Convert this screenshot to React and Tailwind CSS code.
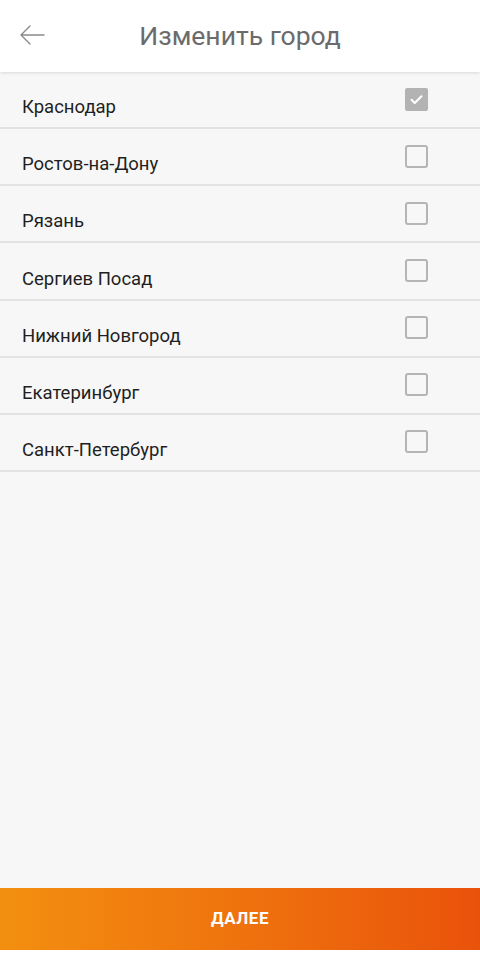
import { useState } from 'react';

const cities = [
  'Краснодар',
  'Ростов-на-Дону',
  'Рязань',
  'Сергиев Посад',
  'Нижний Новгород',
  'Екатеринбург',
  'Санкт-Петербург',
];

const Checkbox = ({ checked }) =>
  checked ? (
    <div className="w-[23px] h-[23px] rounded-[2px] bg-[#b3b3b3] flex items-center justify-center">
      <svg width="17" height="17" viewBox="0 0 24 24" fill="none" stroke="#fff" strokeWidth="3" strokeLinecap="round" strokeLinejoin="round">
        <path d="M5 12.5l4.5 4.5L19 7.5" />
      </svg>
    </div>
  ) : (
    <div className="w-[23px] h-[23px] rounded-[3px] border-2 border-[#b5b5b5]" />
  );

const App = () => {
  const [selected, setSelected] = useState('Краснодар');

  return (
    <div
      className="w-[480px] h-[960px] flex flex-col bg-[#f7f7f7]"
      style={{ fontFamily: 'Roboto, "Noto Sans", sans-serif' }}
    >
      <header className="h-[72px] bg-white flex items-center relative shadow-[0_1px_3px_rgba(0,0,0,0.12)] z-10">
        <button className="absolute left-[18px] top-[21px] w-[28px] h-[28px] flex items-center justify-center">
          <svg width="28" height="28" viewBox="0 0 28 28" fill="none" stroke="#8a8a8a" strokeWidth="1.4" strokeLinecap="round" strokeLinejoin="round">
            <path d="M26 14H3M12 5l-9 9 9 9" />
          </svg>
        </button>
        <h1 className="flex-1 text-center text-[26.5px] text-[#6b6b6b]">Изменить город</h1>
      </header>

      <div className="flex-1 flex flex-col">
        {cities.map((city) => (
          <div
            key={city}
            onClick={() => setSelected(city)}
            className="h-[57.15px] flex items-center justify-between pl-[22px] pr-[52px] border-b-2 border-[#e3e3e3] cursor-pointer"
          >
            <span className="text-[18.5px] text-[#1f1f1f] pt-[17px]">{city}</span>
            <div className="-mt-[1px]">
              <Checkbox checked={selected === city} />
            </div>
          </div>
        ))}
      </div>

      <div className="bg-white pb-[10px]">
        <button className="h-[62px] w-full bg-gradient-to-r from-[#f38f10] to-[#e9520b] text-white text-[17px] font-bold tracking-[0.5px]">
          ДАЛЕЕ
        </button>
      </div>
    </div>
  );
};

export default App;
